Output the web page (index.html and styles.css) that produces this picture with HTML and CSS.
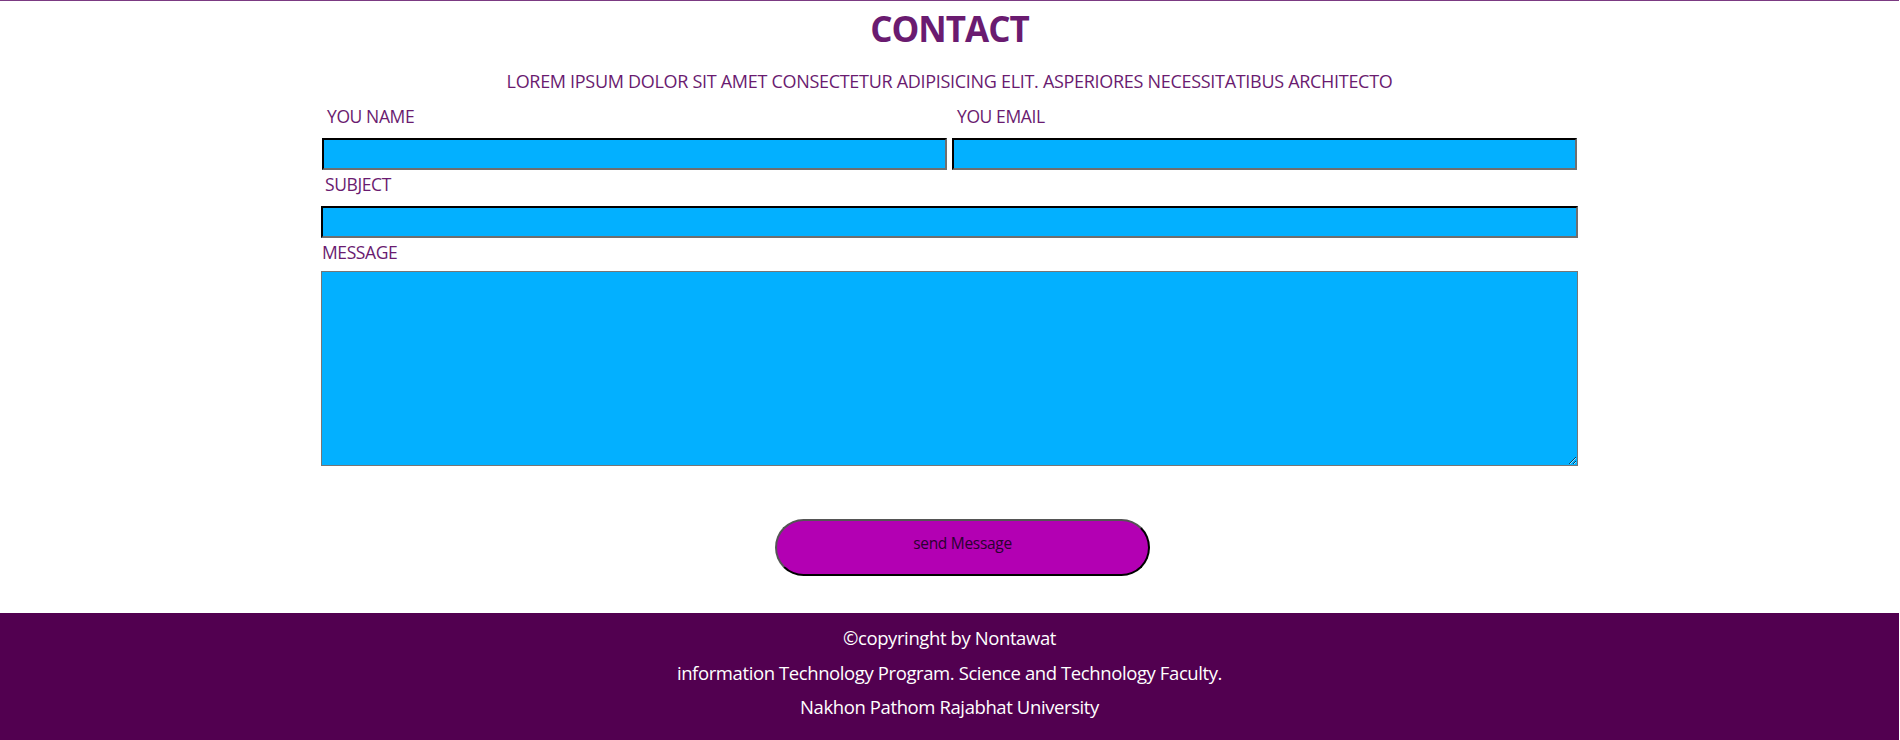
FILE: index.html
```html
<!DOCTYPE html>
<html lang="en">
<head>
<meta charset="utf-8">
<title>Contact</title>
<link rel="stylesheet" href="styles.css">
</head>
<body>
<main class="contact">
  <h1 class="contact-title">CONTACT</h1>
  <p class="contact-lead">LOREM IPSUM DOLOR SIT AMET CONSECTETUR ADIPISICING ELIT. ASPERIORES NECESSITATIBUS ARCHITECTO</p>
  <form class="contact-form">
    <div class="row-two">
      <div class="field">
        <label class="label label-first label-name">YOU NAME</label>
        <input class="text-input" type="text">
      </div>
      <div class="field">
        <label class="label label-first label-email">YOU EMAIL</label>
        <input class="text-input" type="text">
      </div>
    </div>
    <div class="field">
      <label class="label label-subject">SUBJECT</label>
      <input class="text-input" type="text">
    </div>
    <div class="field">
      <label class="label label-message">MESSAGE</label>
      <textarea class="text-area"></textarea>
    </div>
    <div class="actions">
      <button class="send-btn" type="button">send Message</button>
    </div>
  </form>
</main>
<footer class="site-footer">
  <p>©copyringht by Nontawat</p>
  <p>information Technology Program. Science and Technology Faculty.</p>
  <p>Nakhon Pathom Rajabhat University</p>
</footer>
</body>
</html>
```

FILE: styles.css
```css
* { box-sizing: border-box; }
html, body { margin: 0; padding: 0; }
body {
  font-family: "Open Sans", "Noto Sans", sans-serif;
  background: #fff;
  border-top: 1px solid #7b3a82;
  width: 1899px;
}
.contact {
  width: 1257px;
  margin: 0 auto;
  display: flex;
  flex-direction: column;
}
.contact-title {
  margin: 8px 0 0;
  height: 40px;
  text-align: center;
  color: #6a1b70;
  font-size: 35px;
  font-weight: 700;
  line-height: 40px;
  letter-spacing: -1px;
}
.contact-lead {
  margin: 22px 0 0;
  text-align: center;
  color: #6a1b70;
  font-size: 18px;
  line-height: 20px;
  letter-spacing: -0.3px;
}
.contact-form {
  display: flex;
  flex-direction: column;
}
.row-two {
  display: grid;
  grid-template-columns: 1fr 1fr;
  gap: 5px;
  padding: 0 1px;
}
.field {
  display: flex;
  flex-direction: column;
}
.label {
  color: #6a1b70;
  font-size: 17.5px;
  line-height: 20px;
  height: 20px;
  letter-spacing: -0.4px;
  margin-top: 4px;
  margin-bottom: 12px;
}
.label-first { margin-top: 15px; }
.label-name { padding-left: 5px; }
.label-email { padding-left: 5px; }
.label-subject { padding-left: 4px; }
.label-message { margin-bottom: 9px; padding-left: 1px; }
.text-input {
  height: 32px;
  background: #03b0ff;
  border: 2px inset #767676;
  border-top-color: #1f1f1f;
  border-left-color: #1f1f1f;
  border-right-color: #6f6f6f;
  border-bottom-color: #6f6f6f;
  padding: 0;
  font: inherit;
}
.text-area {
  height: 195px;
  background: #03b0ff;
  border: 1px solid #767676;
  padding: 2px;
  font: inherit;
  resize: vertical;
}
.actions {
  display: flex;
  justify-content: center;
  padding-left: 26px;
  margin-top: 53px;
  margin-bottom: 37px;
}
.send-btn {
  width: 375px;
  height: 57px;
  background: #b300b3;
  border: 2px solid #000;
  border-top-color: #555;
  border-left-color: #555;
  border-radius: 29px;
  color: #2a0030;
  font-family: "Open Sans", sans-serif;
  font-size: 15.5px;
  letter-spacing: -0.3px;
  padding: 0 0 9px;
}
.site-footer {
  background: #520050;
  color: #fff;
  text-align: center;
  padding: 8px 0 0;
  height: 127px;
}
.site-footer p {
  margin: 0;
  font-size: 18.5px;
  line-height: 34.5px;
  letter-spacing: -0.4px;
}
```
